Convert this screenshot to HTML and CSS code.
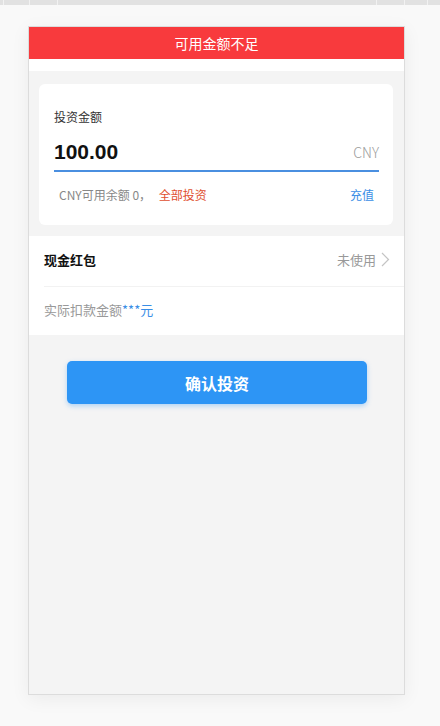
FILE: index.html
```html
<!DOCTYPE html>
<html lang="zh-CN">
<head>
<meta charset="utf-8">
<title>确认投资</title>
<link rel="stylesheet" href="styles.css">
</head>
<body>
<div class="topbar"><i></i><i></i><i></i><i></i><i></i><i></i></div>
<div class="frame">
  <div class="alert">可用金额不足</div>
  <div class="strip"></div>
  <div class="content">
    <div class="card">
      <div class="label">投资金额</div>
      <div class="amount-row">
        <span class="amount">100.00</span>
        <span class="unit">CNY</span>
      </div>
      <div class="balance-row">
        <span class="balance">CNY可用余额 0， <span class="all">全部投资</span></span>
        <span class="recharge">充值</span>
      </div>
    </div>
    <div class="section">
      <div class="row">
        <span class="row-title">现金红包</span>
        <span class="row-value">未使用
          <svg class="chev" width="9" height="15" viewBox="0 0 9 15"><path d="M1 1 L7.5 7.5 L1 14" fill="none" stroke="#c4c4c4" stroke-width="1.2"/></svg>
        </span>
      </div>
      <div class="row2">实际扣款金额<span class="blue">***元</span></div>
    </div>
    <div class="btn-wrap">
      <button class="btn">确认投资</button>
    </div>
  </div>
</div>
</body>
</html>
```

FILE: styles.css
```css
* { box-sizing: border-box; }
html, body { margin: 0; padding: 0; }
body {
  background: #f9f9f9;
  font-family: "Noto Sans CJK SC", "Noto Sans", sans-serif;
  width: 440px;
  height: 726px;
  overflow: hidden;
}
.topbar {
  height: 5px;
  background: #e2e2e2;
  position: relative;
}
.topbar i {
  position: absolute;
  top: 0;
  width: 1px;
  height: 5px;
  background: #f2f2f2;
}
.topbar i:nth-child(1) { left: 3px; }
.topbar i:nth-child(2) { left: 29px; }
.topbar i:nth-child(3) { left: 57px; }
.topbar i:nth-child(4) { left: 376px; }
.topbar i:nth-child(5) { left: 404px; }
.topbar i:nth-child(6) { left: 427px; }
.frame {
  margin: 21px 0 0 28px;
  width: 377px;
  height: 669px;
  border: 1px solid #dcdcdc;
  background: #f4f4f4;
  box-shadow: 0 4px 18px rgba(0,0,0,0.06);
  display: flex;
  flex-direction: column;
}
.alert {
  height: 32px;
  line-height: 32px;
  background: #f83a3d;
  color: #fff;
  text-align: center;
  font-size: 14px;
}
.strip {
  height: 12px;
  background: #fff;
}
.content {
  flex: 1;
  background: #f4f4f4;
  padding-top: 13px;
}
.card {
  margin: 0 11px 0 10px;
  height: 141px;
  background: #fff;
  border-radius: 6px;
  padding: 24px 14px 0 15px;
}
.label {
  font-size: 12px;
  color: #333;
  line-height: 18px;
}
.amount-row {
  margin-top: 13px;
  display: flex;
  justify-content: space-between;
  align-items: center;
  height: 26px;
  border-bottom: 2px solid #4a8fe0;
  box-sizing: content-box;
  padding-bottom: 5px;
}
.amount {
  font-family: "Liberation Sans", sans-serif;
  font-size: 21px;
  font-weight: bold;
  color: #111;
}
.unit {
  font-size: 14px;
  color: #9a9a9a;
  font-weight: 300;
}
.balance-row {
  margin-top: 14px;
  display: flex;
  justify-content: space-between;
  padding: 0 5px;
  font-size: 12px;
  line-height: 18px;
}
.balance { color: #888; }
.all { color: #e05030; margin-left: 5px; }
.recharge { color: #3a8ee6; }
.section {
  margin-top: 11px;
  background: #fff;
}
.row {
  height: 51px;
  margin-left: 15px;
  padding-right: 14px;
  padding-bottom: 3px;
  border-bottom: 1px solid #f2f2f2;
  display: flex;
  justify-content: space-between;
  align-items: center;
}
.row-title {
  font-size: 13px;
  font-weight: bold;
  color: #111;
}
.row-value {
  font-size: 13px;
  color: #999;
  display: flex;
  align-items: center;
  gap: 5px;
}
.row2 {
  height: 48px;
  padding-left: 15px;
  padding-bottom: 3px;
  display: flex;
  align-items: center;
  font-size: 13px;
  color: #999;
}
.blue { color: #3a8ee6; }
.btn-wrap {
  padding: 26px 0 0 38px;
}
.btn {
  width: 300px;
  height: 43px;
  border: none;
  border-radius: 5px;
  background: #2d95f5;
  color: #fff;
  font-family: "Noto Sans CJK SC", sans-serif;
  font-size: 16px;
  font-weight: bold;
  box-shadow: 0 2px 5px rgba(45,149,245,0.35);
  padding: 0;
}
```
